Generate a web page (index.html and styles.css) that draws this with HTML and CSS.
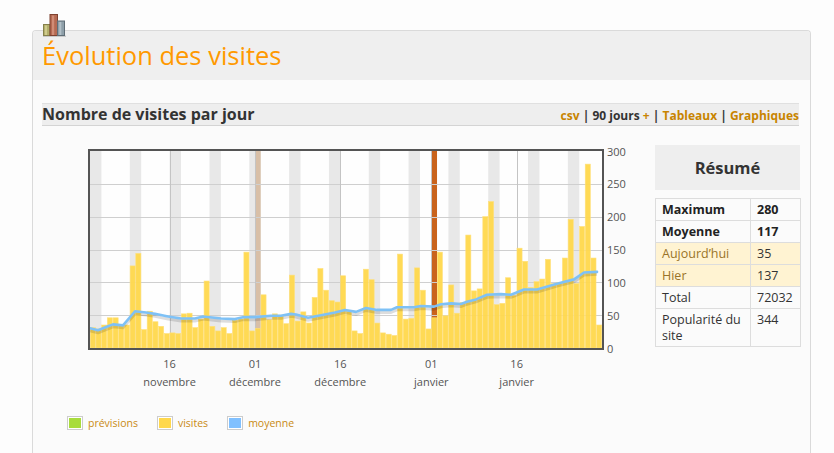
FILE: index.html
```html
<!DOCTYPE html>
<html lang="fr">
<head>
<meta charset="utf-8">
<title>Évolution des visites</title>
<link rel="stylesheet" href="styles.css">
</head>
<body>
<div class="panel">
  <svg class="panel-icon" width="24" height="24" viewBox="0 0 24 24">
    <rect x="1" y="22.5" width="23" height="1.5" fill="#c9c9c9"/>
    <rect x="1.5" y="11.5" width="6.5" height="11" fill="#b3af6c" stroke="#85814c" stroke-width="1"/>
    <rect x="3" y="12.5" width="2" height="9.5" fill="#cfcb8c"/>
    <rect x="8" y="1.5" width="7.5" height="21" fill="#b56a53" stroke="#7f4230" stroke-width="1"/>
    <rect x="10" y="2.5" width="2.2" height="19.5" fill="#d08c76"/>
    <rect x="15.5" y="8" width="7" height="14.5" fill="#8e9fa9" stroke="#5f6d76" stroke-width="1"/>
    <rect x="17.3" y="9" width="2" height="13" fill="#b2c0c8"/>
  </svg>
  <div class="panel-head">
    <h2 class="panel-title">Évolution des visites</h2>
  </div>
  <div class="panel-body">
    <div class="section-bar">
      <h3 class="section-title">Nombre de visites par jour</h3>
      <div class="section-links"><a class="link">csv</a> | <span class="current">90 jours</span> <a class="link">+</a> | <a class="link">Tableaux</a> | <a class="link">Graphiques</a></div>
    </div>
    <div class="content">
      <svg id="chart" class="chart" width="600" height="252" viewBox="0 0 600 252"></svg>
      <div class="summary">
        <div class="summary-head">Résumé</div>
        <table class="summary-table">
          <colgroup><col class="col-label"><col class="col-value"></colgroup>
          <tr class="row-strong"><td class="label">Maximum</td><td>280</td></tr>
          <tr class="row-strong"><td class="label">Moyenne</td><td>117</td></tr>
          <tr class="row-hl"><td class="label">Aujourd’hui</td><td>35</td></tr>
          <tr class="row-hl"><td class="label">Hier</td><td>137</td></tr>
          <tr><td class="label">Total</td><td>72032</td></tr>
          <tr><td class="label">Popularité du site</td><td>344</td></tr>
        </table>
      </div>
    </div>
    <div class="legend">
      <span class="legend-item"><span class="swatch"><span class="swatch-fill green"></span></span>prévisions</span>
      <span class="legend-item"><span class="swatch"><span class="swatch-fill yellow"></span></span>visites</span>
      <span class="legend-item"><span class="swatch"><span class="swatch-fill blue"></span></span>moyenne</span>
    </div>
  </div>
</div>
<script src="script.js"></script>
</body>
</html>
```

FILE: styles.css
```css
* { box-sizing: border-box; }

body {
  margin: 0;
  padding: 30px 0 0 32px;
  background: #fdfdfd;
  font-family: "Open Sans", "DejaVu Sans", sans-serif;
  color: #333;
}

.panel {
  position: relative;
  width: 779px;
  min-height: 440px;
  border: 1px solid #dadada;
  border-bottom: none;
  border-radius: 4px 4px 0 0;
  background: #fbfbfb;
}

.panel-icon {
  position: absolute;
  left: 9px;
  top: -18px;
}

.panel-head {
  height: 49px;
  padding: 7px 0 0 9px;
  background: #efefef;
  border-radius: 3px 3px 0 0;
}

.panel-title {
  margin: 0;
  font-size: 25.5px;
  font-weight: 400;
  line-height: 34px;
  color: #ff9900;
}

.panel-body {
  padding: 23px 10px 0 9px;
}

.section-bar {
  display: flex;
  justify-content: space-between;
  align-items: baseline;
  height: 23px;
  margin-right: 1px;
  background: #eeeeee;
  border-top: 1px solid #e0e0e0;
  border-bottom: 1px solid #d4d4d4;
}

.section-title {
  margin: 0;
  font-size: 16px;
  font-weight: 700;
  line-height: 21px;
  color: #333;
}

.section-links {
  font-size: 12px;
  font-weight: 700;
  line-height: 21px;
  color: #333;
}

.link {
  color: #c88400;
  text-decoration: none;
}

.content {
  display: flex;
  gap: 13px;
  margin-top: 15px;
}

.chart {
  display: block;
  flex: none;
}

.summary {
  width: 145px;
  margin-top: 4px;
}

.summary-head {
  height: 45px;
  background: #eeeeee;
  text-align: center;
  font-size: 16.5px;
  font-weight: 700;
  line-height: 45px;
  color: #333;
}

.summary-table {
  width: 145px;
  margin-top: 8px;
  border-collapse: collapse;
  table-layout: fixed;
  font-size: 12.5px;
  line-height: 16px;
  color: #333;
}

.col-label { width: 95px; }
.col-value { width: 50px; }

.summary-table td {
  border: 1px solid #dddddd;
  padding: 3px 6px 2px;
  vertical-align: top;
}

.row-strong td {
  font-weight: 700;
  color: #222;
}

.row-hl td {
  background: #fff3d2;
}

.row-hl .label {
  color: #9a7328;
}

.legend {
  display: flex;
  gap: 19px;
  margin: 23px 0 0 25px;
  font-size: 10.5px;
  color: #c98a14;
}

.legend-item {
  display: flex;
  align-items: center;
  gap: 5px;
}

.swatch {
  width: 16px;
  height: 14px;
  padding: 1px;
  border: 1px solid #cccccc;
  background: #fff;
}

.swatch-fill {
  display: block;
  width: 100%;
  height: 100%;
}

.green { background: #a8dc3c; }
.yellow { background: #ffd84c; }
.blue { background: #80c0ff; }
```

FILE: script.js
```js
(function () {
  var svg = document.getElementById('chart');
  var ox = 42, oy = 141;
  var X0 = 90, DW = 512 / 90, Y0 = 348, YS = 197 / 300;
  function px(i) { return X0 + i * DW - ox; }
  function py(v) { return Y0 - v * YS - oy; }
  function f(n) { return Math.round(n * 100) / 100; }

  var values = [31,29,35,46,46,35,35,125,144,28,
    56,40,33,22,23,22,52,53,31,44,
    102,33,26,31,22,42,44,146,26,30,
    81,43,52,50,37,111,41,55,38,77,
    121,88,72,70,110,56,26,22,120,104,
    38,23,21,19,143,44,45,122,88,29,
    46,146,49,96,53,69,172,87,90,200,
    223,66,68,107,80,152,132,92,101,105,
    135,98,100,137,196,98,185,280,137,35];

  var avg = [[90,30],[98,27],[108,33],[113,36],[123,34.5],[135,56],[146,54],[155,52],
    [168,48],[181,45],[195,45],[203,48],[221,45],[235,44],[243,47],[255,47],[271,49],
    [281,49],[291,52],[296,51],[308,46],[321,50],[335,54],[345,58],[356,55],[366,61],
    [377,58],[391,58],[397,62],[414,62],[421,64],[434,63],[441,66.5],[451,68],[461,67],
    [467,70.5],[476,74],[487,81],[501,82],[511,81],[524,89],[537,89],[557,98],
    [574,104.5],[584,115],[597,116]];

  var top = py(300), bottom = py(0), h = bottom - top;
  var s = '';
  s += '<rect x="' + px(0) + '" y="' + top + '" width="512" height="' + f(h) + '" fill="#fefefe"/>';

  for (var i = 0; i < 90; i += 7) {
    var w = Math.min(2, 90 - i) * DW;
    s += '<rect x="' + f(px(i)) + '" y="' + f(top) + '" width="' + f(w) + '" height="' + f(h) + '" fill="#e8e8e8"/>';
  }
  s += '<rect x="' + f(px(29)) + '" y="' + f(top) + '" width="' + f(DW) + '" height="' + f(h) + '" fill="#d8bfa7"/>';
  s += '<rect x="' + f(px(60)) + '" y="' + f(top) + '" width="' + f(DW) + '" height="' + f(h) + '" fill="#c9631c"/>';

  for (var v = 50; v < 300; v += 50) {
    var gy = Math.round(py(v)) + 0.5;
    s += '<line x1="' + px(0) + '" x2="' + px(90) + '" y1="' + gy + '" y2="' + gy + '" stroke="#cfcfcf" stroke-width="1"/>';
  }
  var ticks = [14, 29, 44, 60, 75];
  ticks.forEach(function (t) {
    var x = Math.round(px(t)) + 0.5;
    s += '<line x1="' + x + '" x2="' + x + '" y1="' + f(top) + '" y2="' + f(bottom) + '" stroke="#c4c4c4" stroke-width="1"/>';
  });

  values.forEach(function (val, i) {
    var y = py(val);
    s += '<rect x="' + f(px(i) + 0.3) + '" y="' + f(y) + '" width="' + f(DW - 0.6) + '" height="' + f(bottom - y) + '" fill="#ffd84c" fill-opacity="0.95" stroke="#ffe07a" stroke-width="0.6"/>';
  });

  var pts = avg.map(function (p) { return f(p[0] - ox) + ',' + f(py(p[1])); }).join(' ');
  s += '<polyline points="' + pts + '" fill="none" stroke="rgba(0,0,0,0.13)" stroke-width="3" stroke-linejoin="round" transform="translate(0,2.5)"/>';
  s += '<polyline points="' + pts + '" fill="none" stroke="#7ec1f6" stroke-width="2.6" stroke-linejoin="round" stroke-linecap="round"/>';

  s += '<rect x="' + (89 - ox) + '" y="' + (150 - oy) + '" width="514" height="199" fill="none" stroke="#545454" stroke-width="2"/>';

  for (var yv = 0; yv <= 300; yv += 50) {
    s += '<text x="' + (607 - ox) + '" y="' + f(py(yv)) + '" dominant-baseline="central" class="axis">' + yv + '</text>';
  }
  var labels = [['16', 'novembre'], ['01', 'décembre'], ['16', 'décembre'], ['01', 'janvier'], ['16', 'janvier']];
  ticks.forEach(function (t, k) {
    var x = f(px(t));
    s += '<text x="' + x + '" y="' + (363 - oy) + '" text-anchor="middle" dominant-baseline="central" class="axis">' + labels[k][0] + '</text>';
    s += '<text x="' + x + '" y="' + (381 - oy) + '" text-anchor="middle" dominant-baseline="central" class="axis">' + labels[k][1] + '</text>';
  });

  svg.innerHTML = '<style>.axis{font-family:"Open Sans","DejaVu Sans",sans-serif;font-size:11px;fill:#545454;}</style>' + s;
})();
```
